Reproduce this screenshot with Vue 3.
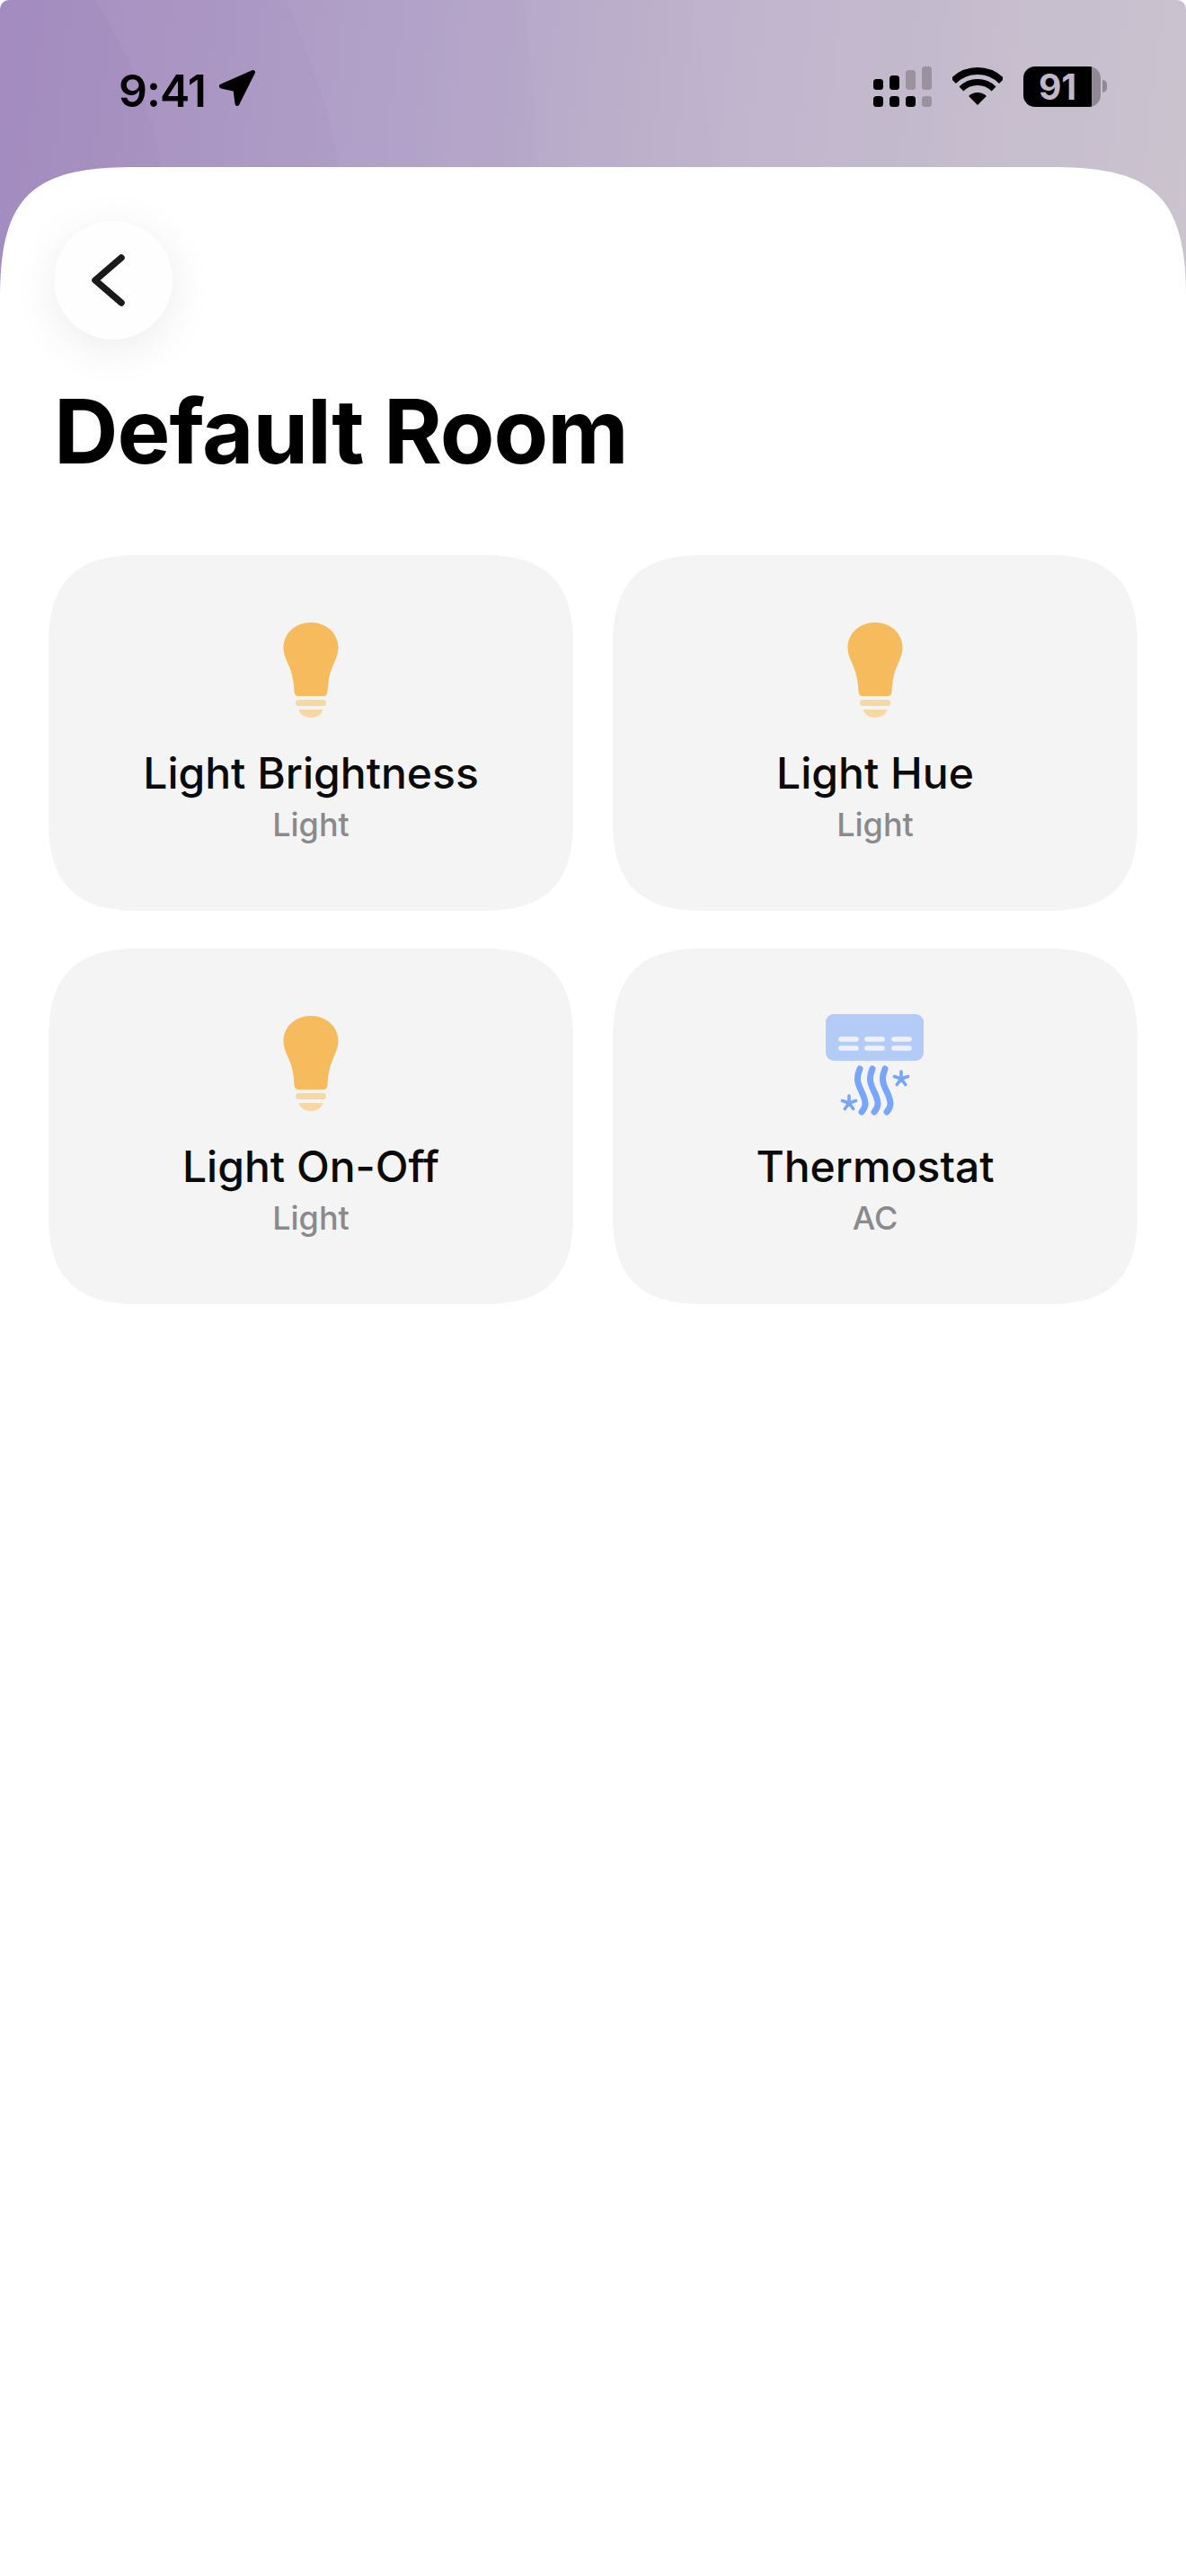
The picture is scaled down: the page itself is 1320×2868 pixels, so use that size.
<script setup>
const devices = [
  { name: 'Light Brightness', type: 'Light', icon: 'bulb' },
  { name: 'Light Hue', type: 'Light', icon: 'bulb' },
  { name: 'Light On-Off', type: 'Light', icon: 'bulb' },
  { name: 'Thermostat', type: 'AC', icon: 'ac' },
]
const asterisk = 'M0 -8V0M-7.6 -2.5L0 0M7.6 -2.5L0 0M-4.7 6.5L0 0M4.7 6.5L0 0'
const wave = 'M0 0C-6 14 0 20 4 30C7 38 7 42 2 48'
</script>

<template>
  <div class="page">
    <header class="hero">
      <svg class="waves" viewBox="0 0 1320 340" aria-hidden="true">
        <path d="M105 0C140 50 170 120 180 186V340H1320V0Z" fill="#fff" opacity=".035" />
        <path d="M318 0C345 60 370 130 377 186V340H1320V0Z" fill="#fff" opacity=".04" />
        <path d="M583 0C590 60 598 130 600 186V340H1320V0Z" fill="#fff" opacity=".03" />
        <path d="M771 0C780 60 790 130 792 186V340H1320V0Z" fill="#fff" opacity=".02" />
      </svg>
      <div class="status">
        <div class="clock">
          <span class="time">9:41</span>
          <svg class="arrow" width="42" height="42" viewBox="0 0 42 42">
            <path d="M38.5 3.5L3.5 19L19 22.5L21 38.5Z" fill="#000" stroke="#000" stroke-width="5" stroke-linejoin="round" />
          </svg>
        </div>
        <div class="indicators">
          <svg width="65" height="45" viewBox="0 0 65 45">
            <g fill="#000">
              <rect x="0" y="14" width="11" height="12" rx="3.5" />
              <rect x="18" y="10" width="11" height="16" rx="3.5" />
              <rect x="0" y="33" width="11" height="12" rx="3.5" />
              <rect x="18" y="33" width="11" height="12" rx="3.5" />
              <rect x="36" y="33" width="11" height="12" rx="3.5" />
            </g>
            <g fill="#9a91a1">
              <rect x="36" y="4" width="11" height="22" rx="3.5" />
              <rect x="54" y="0" width="11" height="26" rx="3.5" />
              <rect x="54" y="33" width="11" height="12" rx="3.5" />
            </g>
          </svg>
          <svg class="wifi" width="56" height="42" viewBox="0 0 56 42">
            <path d="M1.13 15.13A38 38 0 0 1 54.87 15.13" fill="none" stroke="#000" stroke-width="8" />
            <path d="M9.97 23.97A25.5 25.5 0 0 1 46.03 23.97" fill="none" stroke="#000" stroke-width="7" />
            <path d="M28 42L18.1 32.1A14 14 0 0 1 37.9 32.1Z" fill="#000" />
          </svg>
          <div class="battery"><span>91</span></div>
        </div>
      </div>
    </header>

    <main class="sheet">
      <button class="back" type="button" aria-label="Back">
        <svg width="44" height="64" viewBox="0 0 44 64">
          <path d="M36 7L7 32L36 57" transform="translate(0 0)" fill="none" stroke="#1a1a1a" stroke-width="7.5" stroke-linecap="round" stroke-linejoin="round" />
        </svg>
      </button>
      <h1 class="title">Default Room</h1>
      <section class="grid">
        <article v-for="d in devices" :key="d.name" class="card">
          <div class="icon">
            <svg v-if="d.icon === 'bulb'" width="70" height="116" viewBox="0 -4 70 116">
              <path fill="#f5bb5c" d="M35 1C52 1 65.5 13 65.5 29C65.5 36 63 41 60 48C56 57 54 66 53.5 78C53.4 81 51.5 83 49 83H21C18.5 83 16.6 81 16.5 78C16 66 14 57 10 48C7 41 4.5 36 4.5 29C4.5 13 18 1 35 1Z" />
              <rect x="18" y="87" width="34" height="7" rx="3.5" fill="#f5d8a3" />
              <path fill="#f5d8a3" d="M21.5 98H48.5C47 104 41 107 35 107C29 107 23 104 21.5 98Z" />
            </svg>
            <svg v-else width="118" height="116" viewBox="915 1126 118 116">
              <rect x="919" y="1129" width="109" height="52" rx="9" fill="#b3cbf7" />
              <g stroke="#f0f1f6" stroke-width="5.5" stroke-linecap="round">
                <path d="M936 1157H953M965 1157H982M995 1157H1012" />
                <path d="M936 1167H953M965 1167H982M995 1167H1012" />
              </g>
              <g fill="none" stroke="#78a6fb" stroke-width="7" stroke-linecap="round">
                <path v-for="x in [957, 971, 985]" :key="x" :d="wave" :transform="`translate(${x} 1190)`" />
              </g>
              <g fill="none" stroke="#78a6fb" stroke-width="3.6" stroke-linecap="round">
                <path :d="asterisk" transform="translate(1003 1201)" />
                <path :d="asterisk" transform="translate(945 1228)" />
              </g>
            </svg>
          </div>
          <div class="name">{{ d.name }}</div>
          <div class="type">{{ d.type }}</div>
        </article>
      </section>
    </main>
  </div>
</template>

<style scoped>
.page {
  width: 1320px;
  height: 2868px;
  background: #fff;
  overflow: hidden;
  font-family: Inter, "Liberation Sans", sans-serif;
  color: #000;
}
.hero {
  position: relative;
  height: 340px;
  border-radius: 10px 10px 0 0;
  overflow: hidden;
  background: linear-gradient(97deg, #a38bbf 0%, #ad9cc4 35%, #b9acc7 60%, #c5bdcb 100%);
}
.waves {
  position: absolute;
  inset: 0;
  width: 1320px;
  height: 340px;
}
.status {
  position: relative;
  display: flex;
  justify-content: space-between;
  align-items: flex-start;
  padding: 74px 95px 0 132px;
}
.clock {
  display: flex;
  align-items: flex-start;
  gap: 14px;
}
.time {
  font-size: 50px;
  font-weight: 600;
  line-height: 50px;
  margin-top: 2px;
  letter-spacing: -1px;
}
.arrow {
  margin-top: 3px;
}
.indicators {
  display: flex;
  align-items: flex-start;
  gap: 23px;
}
.wifi {
  margin-top: 1px;
}
.battery {
  position: relative;
  width: 86px;
  height: 45px;
  box-sizing: border-box;
  padding-right: 10px;
  border-radius: 13px;
  display: flex;
  align-items: center;
  justify-content: center;
  background: linear-gradient(90deg, #000 88.4%, #8f8895 88.4%);
  color: #c0b7c8;
  font-size: 39px;
  font-weight: 700;
  line-height: 45px;
}
.battery::after {
  content: "";
  position: absolute;
  right: -7px;
  top: 15px;
  width: 5px;
  height: 14px;
  border-radius: 0 7px 7px 0;
  background: #8f8895;
}
.sheet {
  position: relative;
  margin-top: -154px;
  height: 2682px;
  box-sizing: border-box;
  padding: 60px 0 0 54px;
  background: #fff;
  clip-path: path("M0 144C0 29 40 0 150 0H1170C1280 0 1320 29 1320 144V2682H0Z");
}
.back {
  display: flex;
  align-items: center;
  justify-content: center;
  width: 132px;
  height: 132px;
  margin-left: 6px;
  padding: 0 10px 0 0;
  border: none;
  border-radius: 50%;
  background: #fefefe;
  box-shadow: 0 10px 50px rgba(0, 0, 0, 0.08);
}
.title {
  margin: 42px 0 78px 6px;
  font-size: 99px;
  font-weight: 700;
  line-height: 120px;
  letter-spacing: -1px;
}
.grid {
  display: grid;
  grid-template-columns: 584px 584px;
  grid-auto-rows: 396px;
  column-gap: 44px;
  row-gap: 42px;
}
.card {
  display: flex;
  flex-direction: column;
  align-items: center;
  padding-top: 70px;
  box-sizing: border-box;
  background: #f4f4f4;
  clip-path: path("M0 100C0 30 30 0 100 0H484C554 0 584 30 584 100V296C584 366 554 396 484 396H100C30 396 0 366 0 296Z");
}
.icon {
  height: 116px;
  display: flex;
}
.name {
  margin-top: 28px;
  font-size: 48px;
  font-weight: 500;
  line-height: 58px;
  color: #0a0a0a;
}
.type {
  margin-top: 6px;
  font-size: 36px;
  font-weight: 500;
  line-height: 44px;
  color: #8a8a8e;
}
</style>
